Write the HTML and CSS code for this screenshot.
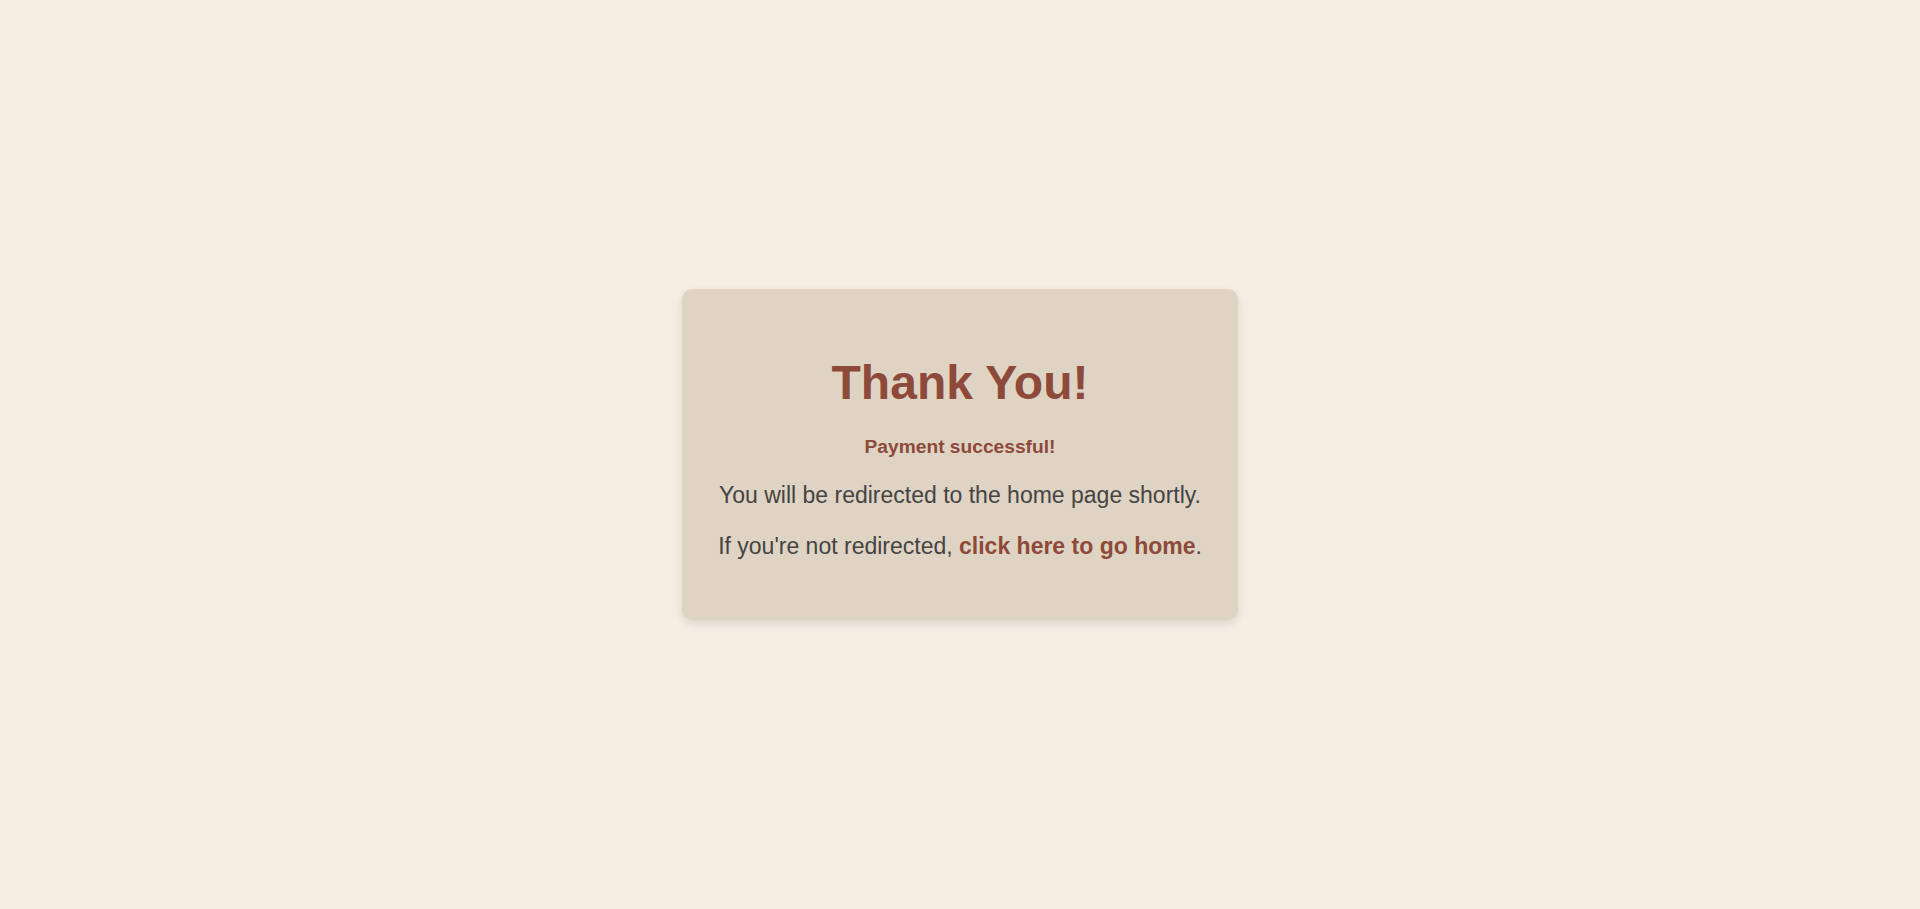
FILE: index.html
```html
<!DOCTYPE html>
<html lang="en">
<head>
<meta charset="utf-8">
<title>Thank You</title>
<link rel="stylesheet" href="styles.css">
</head>
<body>
<main class="page">
  <section class="card">
    <h1 class="title">Thank You!</h1>
    <p class="status">Payment successful!</p>
    <p class="message">You will be redirected to the home page shortly.</p>
    <p class="message last">If you're not redirected, <a class="home-link" href="#">click here to go home</a>.</p>
  </section>
</main>
</body>
</html>
```
FILE: styles.css
```css
* { box-sizing: border-box; }
html, body { margin: 0; padding: 0; }
body {
  background: #F8EDE3;
  font-family: "Liberation Sans", Arial, sans-serif;
  color: #444;
}
.page {
  min-height: 100vh;
  display: flex;
  align-items: center;
  justify-content: center;
}
.card {
  width: 556px;
  background: #DFD3C3;
  border-radius: 10px;
  box-shadow: 0 4px 10px rgba(0, 0, 0, 0.1);
  padding: 66px 20px 60px;
  text-align: center;
}
.title {
  margin: 0 0 26px;
  font-size: 48px;
  font-weight: bold;
  color: #8D493A;
}
.status {
  margin: 0 0 24px;
  font-size: 19.2px;
  font-weight: bold;
  color: #8D493A;
}
.message {
  margin: 0 0 24px;
  font-size: 23px;
  color: #444;
}
.message.last { margin-bottom: 0; }
.home-link {
  color: #8D493A;
  font-weight: bold;
  text-decoration: none;
}
```
